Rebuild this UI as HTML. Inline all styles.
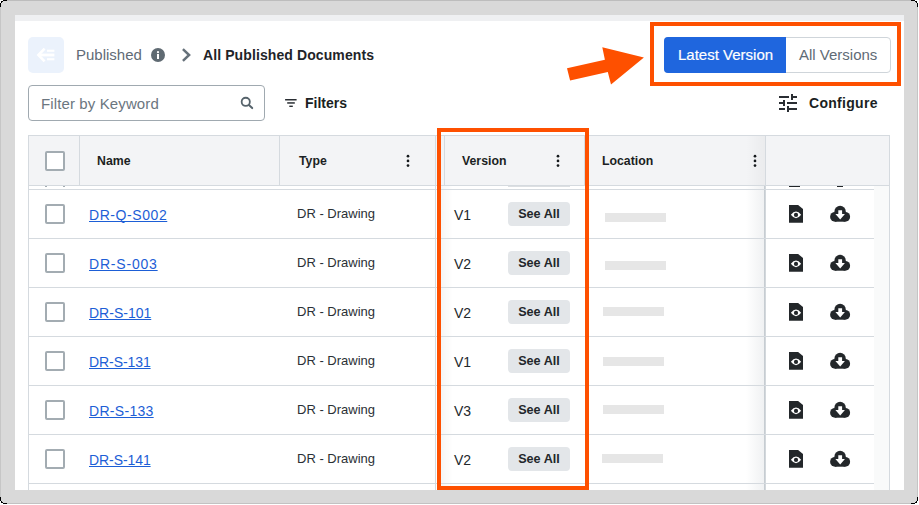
<!DOCTYPE html>
<html><head><meta charset="utf-8">
<style>
*{box-sizing:border-box;margin:0;padding:0}
html,body{width:919px;height:505px;overflow:hidden;background:#d9d9d9;font-family:"Liberation Sans",sans-serif;position:relative}
.a{position:absolute}
#page{position:absolute;left:15px;top:15px;width:889px;height:475px;background:#fff;overflow:hidden}
#band{position:absolute;left:0;top:0;width:889px;height:6px;background:#eff0f2}
.t{position:absolute;white-space:nowrap;line-height:1}
.hdr{position:absolute;left:28px;top:135px;width:862px;height:51px;background:#f3f4f6;border:1px solid #d5dadf}
.vl{position:absolute;width:1px;background:#d5dadf}
.hl{position:absolute;height:1px;background:#d5dadf}
.cb{position:absolute;width:20px;height:20px;border:2px solid #a3acb2;border-radius:2px;background:#fff}
.link{color:#1d5ed6;text-decoration:underline;text-decoration-skip-ink:none;font-size:14px}
.typ{color:#2b3035;font-size:13px}
.ver{color:#23282c;font-size:14px}
.see{position:absolute;width:62px;height:24px;background:#e3e6e9;border-radius:4px;font-size:12.6px;font-weight:bold;color:#22272b;text-align:center;line-height:24px}
.loc{position:absolute;height:9px;background:#e6e6e6}
.kb{position:absolute;width:3px;height:13px}
.kb i{position:absolute;left:0;width:3px;height:3px;border-radius:50%;background:#2a2e33}
</style></head>
<body>
<!-- frame edges -->
<div class="a" style="left:918px;top:0;width:1px;height:505px;background:#fff"></div>
<div class="a" style="left:0;top:504px;width:919px;height:1px;background:#fff"></div>
<div class="a" style="left:0;top:0;width:918px;height:1px;background:#bdbdbd"></div>
<div class="a" style="left:0;top:0;width:1px;height:504px;background:#c6c6c6"></div>
<div class="a" style="left:917px;top:0;width:1px;height:504px;background:#c4c4c4"></div>
<div class="a" style="left:0;top:503px;width:918px;height:1px;background:#c2c2c2"></div>
<svg class="a" style="left:0;top:0;z-index:5" width="919" height="505" shape-rendering="crispEdges"><rect x="0" y="0" width="1" height="1" fill="#fff"/><rect x="917" y="0" width="1" height="1" fill="#fff"/><rect x="0" y="503" width="1" height="1" fill="#fff"/><rect x="917" y="503" width="1" height="1" fill="#fff"/><rect x="1" y="0" width="1" height="1" fill="#fff"/><rect x="916" y="0" width="1" height="1" fill="#fff"/><rect x="1" y="503" width="1" height="1" fill="#fff"/><rect x="916" y="503" width="1" height="1" fill="#fff"/><rect x="2" y="0" width="1" height="1" fill="#fff"/><rect x="915" y="0" width="1" height="1" fill="#fff"/><rect x="2" y="503" width="1" height="1" fill="#fff"/><rect x="915" y="503" width="1" height="1" fill="#fff"/><rect x="0" y="1" width="1" height="1" fill="#fff"/><rect x="917" y="1" width="1" height="1" fill="#fff"/><rect x="0" y="502" width="1" height="1" fill="#fff"/><rect x="917" y="502" width="1" height="1" fill="#fff"/><rect x="0" y="2" width="1" height="1" fill="#fff"/><rect x="917" y="2" width="1" height="1" fill="#fff"/><rect x="0" y="501" width="1" height="1" fill="#fff"/><rect x="917" y="501" width="1" height="1" fill="#fff"/><rect x="3" y="0" width="1" height="1" fill="#000"/><rect x="914" y="0" width="1" height="1" fill="#000"/><rect x="3" y="503" width="1" height="1" fill="#000"/><rect x="914" y="503" width="1" height="1" fill="#000"/><rect x="4" y="0" width="1" height="1" fill="#000"/><rect x="913" y="0" width="1" height="1" fill="#000"/><rect x="4" y="503" width="1" height="1" fill="#000"/><rect x="913" y="503" width="1" height="1" fill="#000"/><rect x="5" y="0" width="1" height="1" fill="#000"/><rect x="912" y="0" width="1" height="1" fill="#000"/><rect x="5" y="503" width="1" height="1" fill="#000"/><rect x="912" y="503" width="1" height="1" fill="#000"/><rect x="6" y="0" width="1" height="1" fill="#000"/><rect x="911" y="0" width="1" height="1" fill="#000"/><rect x="6" y="503" width="1" height="1" fill="#000"/><rect x="911" y="503" width="1" height="1" fill="#000"/><rect x="1" y="1" width="1" height="1" fill="#000"/><rect x="916" y="1" width="1" height="1" fill="#000"/><rect x="1" y="502" width="1" height="1" fill="#000"/><rect x="916" y="502" width="1" height="1" fill="#000"/><rect x="2" y="1" width="1" height="1" fill="#000"/><rect x="915" y="1" width="1" height="1" fill="#000"/><rect x="2" y="502" width="1" height="1" fill="#000"/><rect x="915" y="502" width="1" height="1" fill="#000"/><rect x="1" y="2" width="1" height="1" fill="#000"/><rect x="916" y="2" width="1" height="1" fill="#000"/><rect x="1" y="501" width="1" height="1" fill="#000"/><rect x="916" y="501" width="1" height="1" fill="#000"/><rect x="0" y="3" width="1" height="1" fill="#000"/><rect x="917" y="3" width="1" height="1" fill="#000"/><rect x="0" y="500" width="1" height="1" fill="#000"/><rect x="917" y="500" width="1" height="1" fill="#000"/><rect x="0" y="4" width="1" height="1" fill="#000"/><rect x="917" y="4" width="1" height="1" fill="#000"/><rect x="0" y="499" width="1" height="1" fill="#000"/><rect x="917" y="499" width="1" height="1" fill="#000"/><rect x="0" y="5" width="1" height="1" fill="#000"/><rect x="917" y="5" width="1" height="1" fill="#000"/><rect x="0" y="498" width="1" height="1" fill="#000"/><rect x="917" y="498" width="1" height="1" fill="#000"/><rect x="0" y="6" width="1" height="1" fill="#000"/><rect x="917" y="6" width="1" height="1" fill="#000"/><rect x="0" y="497" width="1" height="1" fill="#000"/><rect x="917" y="497" width="1" height="1" fill="#000"/></svg>
<div id="page">
  <div id="band"></div>
</div>

<!-- back button -->
<div class="a" style="left:28px;top:37px;width:36px;height:36px;background:#ebf2fc;border-radius:5px"></div>
<svg class="a" style="left:28px;top:37px" width="36" height="36" viewBox="0 0 36 36">
  <path d="M16.6 11.6 L10.4 18 L16.6 24.4" fill="none" stroke="#fff" stroke-width="2.6" stroke-linejoin="miter"/>
  <rect x="10" y="16.6" width="16.4" height="2.8" fill="#fff"/>
  <rect x="19" y="12.7" width="7.4" height="2.1" fill="#fff"/>
  <rect x="19" y="21.2" width="7.4" height="2.1" fill="#fff"/>
</svg>

<!-- breadcrumb -->
<div class="t" style="left:76px;top:47px;font-size:15px;color:#5f6b76">Published</div>
<svg class="a" style="left:151px;top:48px" width="14" height="14" viewBox="0 0 14 14">
  <circle cx="7" cy="7" r="7" fill="#5f6a72"/>
  <rect x="6" y="6" width="2" height="5" fill="#fff"/>
  <circle cx="7" cy="4.2" r="1.1" fill="#fff"/>
</svg>
<svg class="a" style="left:180px;top:47px" width="14" height="16" viewBox="0 0 14 16">
  <path d="M2.9 2.2 L9.1 8 L2.9 13.8" fill="none" stroke="#66717a" stroke-width="2.5"/>
</svg>
<div class="t" style="left:203px;top:48px;font-size:14px;font-weight:bold;color:#1f2429;letter-spacing:0.1px">All Published Documents</div>

<!-- toggle -->
<div class="a" style="left:664px;top:37px;width:227px;height:36px;border:1px solid #cfd5da;border-radius:4px;background:#fff"></div>
<div class="a" style="left:664px;top:37px;width:122px;height:36px;background:#1f66de;border-radius:4px 0 0 4px"></div>
<div class="t" style="left:678px;top:47px;font-size:15px;color:#fff;-webkit-text-stroke:0.2px #fff">Latest Version</div>
<div class="t" style="left:799px;top:47px;font-size:15px;color:#5f6b76">All Versions</div>

<!-- orange rect + arrow -->
<div class="a" style="left:650px;top:22px;width:251px;height:64px;border:4px solid #fe5000"></div>
<svg class="a" style="left:0;top:0" width="919" height="505">
  <polygon points="567,68.3 570.1,80.6 607.8,72 611,84.6 643.9,57.4 602.3,47.2 604.9,59.8" fill="#fe5000"/>
</svg>

<!-- search -->
<div class="a" style="left:28px;top:85px;width:237px;height:36px;border:1px solid #a0a9b0;border-radius:4px"></div>
<div class="t" style="left:41px;top:96px;font-size:15px;color:#6b7680;letter-spacing:0.12px">Filter by Keyword</div>
<svg class="a" style="left:236px;top:92px" width="20" height="20" viewBox="0 0 20 20">
  <circle cx="9.75" cy="9.85" r="4.1" fill="none" stroke="#56636b" stroke-width="1.8"/>
  <path d="M13.2 13.3 L16.2 16.1" stroke="#56636b" stroke-width="2" stroke-linecap="round"/>
</svg>
<svg class="a" style="left:280px;top:92px" width="20" height="20" viewBox="0 0 20 20">
  <rect x="5.1" y="7" width="11.5" height="1.5" fill="#2a2e33"/>
  <rect x="7.2" y="10.2" width="7.6" height="1.5" fill="#2a2e33"/>
  <rect x="9.3" y="13.6" width="3.5" height="1.4" fill="#2a2e33"/>
</svg>
<div class="t" style="left:305px;top:96px;font-size:14px;font-weight:bold;color:#1b1f23">Filters</div>

<!-- configure -->
<svg class="a" style="left:776px;top:91px" width="24" height="24" viewBox="0 0 24 24">
  <path fill="#2a2e33" d="M3 17v2h6v-2H3zM3 5v2h10V5H3zm10 16v-2h8v-2h-8v-2h-2v6h2zM7 9v2H3v2h4v2h2V9H7zm14 4v-2H11v2h10zm-6-4h2V7h4V5h-4V3h-2v6z"/>
</svg>
<div class="t" style="left:809px;top:96px;font-size:14px;font-weight:bold;color:#1b1f23;letter-spacing:0.3px">Configure</div>

<!-- table header -->
<div class="hdr"></div>
<div class="vl" style="left:79px;top:136px;height:50px"></div>
<div class="vl" style="left:279px;top:136px;height:50px"></div>
<div class="vl" style="left:435px;top:136px;height:50px"></div>
<div class="vl" style="left:444px;top:136px;height:50px"></div>
<div class="vl" style="left:584px;top:136px;height:50px"></div>
<div class="vl" style="left:765px;top:136px;height:50px"></div>
<div class="cb" style="left:45px;top:151px"></div>
<div class="t" style="left:97px;top:155px;font-size:12.3px;font-weight:bold;color:#1b1f23">Name</div>
<div class="t" style="left:299px;top:155px;font-size:12.3px;font-weight:bold;color:#1b1f23">Type</div>
<div class="t" style="left:462px;top:155px;font-size:12.3px;font-weight:bold;color:#1b1f23">Version</div>
<div class="t" style="left:602px;top:155px;font-size:12.3px;font-weight:bold;color:#1b1f23">Location</div>
<svg class="a" style="left:403px;top:151px" width="10" height="20" viewBox="0 0 10 20"><circle cx="5" cy="5.2" r="1.35" fill="#15191c"/><circle cx="5" cy="9.9" r="1.35" fill="#15191c"/><circle cx="5" cy="14.6" r="1.35" fill="#15191c"/></svg>
<svg class="a" style="left:553px;top:151px" width="10" height="20" viewBox="0 0 10 20"><circle cx="5" cy="5.2" r="1.35" fill="#15191c"/><circle cx="5" cy="9.9" r="1.35" fill="#15191c"/><circle cx="5" cy="14.6" r="1.35" fill="#15191c"/></svg>
<svg class="a" style="left:750px;top:151px" width="10" height="20" viewBox="0 0 10 20"><circle cx="5" cy="5.2" r="1.35" fill="#15191c"/><circle cx="5" cy="9.9" r="1.35" fill="#15191c"/><circle cx="5" cy="14.6" r="1.35" fill="#15191c"/></svg>

<!-- table body -->
<div class="vl" style="left:28px;top:186px;height:304px"></div>
<div class="vl" style="left:889px;top:186px;height:304px"></div>
<div class="vl" style="left:435px;top:186px;height:304px"></div>
<div class="vl" style="left:764px;top:186px;width:2px;height:304px;background:#d3d8dc"></div>

<!-- shadows & remnants -->
<div class="a" style="left:874px;top:186px;width:15px;height:304px;background:#f9fafa"></div>
<div class="a" style="left:746px;top:136px;width:19px;height:49px;background:linear-gradient(to right,rgba(0,0,0,0),rgba(0,0,0,0.035))"></div>
<div class="a" style="left:746px;top:186px;width:19px;height:304px;background:linear-gradient(to right,rgba(40,60,80,0),rgba(40,60,80,0.075))"></div>
<div class="a" style="left:441px;top:186px;width:12px;height:304px;background:linear-gradient(to right,rgba(0,0,0,0.04),rgba(0,0,0,0))"></div>
<div class="a" style="left:45px;top:186px;width:2px;height:1px;background:#a3acb2"></div>
<div class="a" style="left:63px;top:186px;width:2px;height:1px;background:#a3acb2"></div>
<div class="a" style="left:508px;top:186px;width:62px;height:1px;background:#dcdfe2"></div>
<div class="a" style="left:789px;top:186px;width:11px;height:1px;background:#23272a"></div>
<div class="a" style="left:837px;top:186px;width:6px;height:1px;background:#23272a"></div>
<div id="rows">
<div class="hl" style="left:28px;top:189px;width:846px"></div>
<div class="hl" style="left:28px;top:238px;width:846px"></div>
<div class="cb" style="left:45px;top:204px"></div>
<div class="t link" style="left:89px;top:208px;letter-spacing:0.57px">DR-Q-S002</div>
<div class="t typ" style="left:297px;top:207px">DR - Drawing</div>
<div class="t ver" style="left:454px;top:208px">V1</div>
<div class="see" style="left:508px;top:202px">See All</div>
<div class="loc" style="left:605px;top:213px;width:61px"></div>
<svg class="a" style="left:789px;top:205px" width="14" height="18" viewBox="0 0 14 18"><path d="M0 0H9.1L14 3.9V17.7H0Z" fill="#23272a"/><path d="M1.9 9.85Q7 2.95 12.1 9.85Q7 16.75 1.9 9.85Z" fill="#fff"/><circle cx="7" cy="9.95" r="2.1" fill="#23272a"/></svg>
<svg class="a" style="left:826px;top:200px" width="28" height="28" viewBox="0 0 28 28"><g fill="#23272a"><circle cx="14.1" cy="11.5" r="5.7"/><circle cx="9" cy="16.8" r="4.9"/><circle cx="19.2" cy="16.8" r="4.9"/><rect x="9" y="12" width="10.2" height="9.7"/></g><path d="M12.3 10.3H16.1V14.1H18.9L14.2 19.4 9.4 14.1H12.3Z" fill="#fff"/></svg>
<div class="hl" style="left:28px;top:287px;width:846px"></div>
<div class="cb" style="left:45px;top:253px"></div>
<div class="t link" style="left:89px;top:257px;letter-spacing:0.8px">DR-S-003</div>
<div class="t typ" style="left:297px;top:256px">DR - Drawing</div>
<div class="t ver" style="left:454px;top:257px">V2</div>
<div class="see" style="left:508px;top:251px">See All</div>
<div class="loc" style="left:605px;top:261px;width:61px"></div>
<svg class="a" style="left:789px;top:254px" width="14" height="18" viewBox="0 0 14 18"><path d="M0 0H9.1L14 3.9V17.7H0Z" fill="#23272a"/><path d="M1.9 9.85Q7 2.95 12.1 9.85Q7 16.75 1.9 9.85Z" fill="#fff"/><circle cx="7" cy="9.95" r="2.1" fill="#23272a"/></svg>
<svg class="a" style="left:826px;top:249px" width="28" height="28" viewBox="0 0 28 28"><g fill="#23272a"><circle cx="14.1" cy="11.5" r="5.7"/><circle cx="9" cy="16.8" r="4.9"/><circle cx="19.2" cy="16.8" r="4.9"/><rect x="9" y="12" width="10.2" height="9.7"/></g><path d="M12.3 10.3H16.1V14.1H18.9L14.2 19.4 9.4 14.1H12.3Z" fill="#fff"/></svg>
<div class="hl" style="left:28px;top:336px;width:846px"></div>
<div class="cb" style="left:45px;top:302px"></div>
<div class="t link" style="left:89px;top:306px;letter-spacing:0px">DR-S-101</div>
<div class="t typ" style="left:297px;top:305px">DR - Drawing</div>
<div class="t ver" style="left:454px;top:306px">V2</div>
<div class="see" style="left:508px;top:300px">See All</div>
<div class="loc" style="left:603px;top:307px;width:61px"></div>
<svg class="a" style="left:789px;top:303px" width="14" height="18" viewBox="0 0 14 18"><path d="M0 0H9.1L14 3.9V17.7H0Z" fill="#23272a"/><path d="M1.9 9.85Q7 2.95 12.1 9.85Q7 16.75 1.9 9.85Z" fill="#fff"/><circle cx="7" cy="9.95" r="2.1" fill="#23272a"/></svg>
<svg class="a" style="left:826px;top:298px" width="28" height="28" viewBox="0 0 28 28"><g fill="#23272a"><circle cx="14.1" cy="11.5" r="5.7"/><circle cx="9" cy="16.8" r="4.9"/><circle cx="19.2" cy="16.8" r="4.9"/><rect x="9" y="12" width="10.2" height="9.7"/></g><path d="M12.3 10.3H16.1V14.1H18.9L14.2 19.4 9.4 14.1H12.3Z" fill="#fff"/></svg>
<div class="hl" style="left:28px;top:385px;width:846px"></div>
<div class="cb" style="left:45px;top:351px"></div>
<div class="t link" style="left:89px;top:355px;letter-spacing:-0.08px">DR-S-131</div>
<div class="t typ" style="left:297px;top:354px">DR - Drawing</div>
<div class="t ver" style="left:454px;top:355px">V1</div>
<div class="see" style="left:508px;top:349px">See All</div>
<div class="loc" style="left:603px;top:357px;width:61px"></div>
<svg class="a" style="left:789px;top:352px" width="14" height="18" viewBox="0 0 14 18"><path d="M0 0H9.1L14 3.9V17.7H0Z" fill="#23272a"/><path d="M1.9 9.85Q7 2.95 12.1 9.85Q7 16.75 1.9 9.85Z" fill="#fff"/><circle cx="7" cy="9.95" r="2.1" fill="#23272a"/></svg>
<svg class="a" style="left:826px;top:347px" width="28" height="28" viewBox="0 0 28 28"><g fill="#23272a"><circle cx="14.1" cy="11.5" r="5.7"/><circle cx="9" cy="16.8" r="4.9"/><circle cx="19.2" cy="16.8" r="4.9"/><rect x="9" y="12" width="10.2" height="9.7"/></g><path d="M12.3 10.3H16.1V14.1H18.9L14.2 19.4 9.4 14.1H12.3Z" fill="#fff"/></svg>
<div class="hl" style="left:28px;top:434px;width:846px"></div>
<div class="cb" style="left:45px;top:400px"></div>
<div class="t link" style="left:89px;top:404px;letter-spacing:0.3px">DR-S-133</div>
<div class="t typ" style="left:297px;top:403px">DR - Drawing</div>
<div class="t ver" style="left:454px;top:404px">V3</div>
<div class="see" style="left:508px;top:398px">See All</div>
<div class="loc" style="left:603px;top:405px;width:61px"></div>
<svg class="a" style="left:789px;top:401px" width="14" height="18" viewBox="0 0 14 18"><path d="M0 0H9.1L14 3.9V17.7H0Z" fill="#23272a"/><path d="M1.9 9.85Q7 2.95 12.1 9.85Q7 16.75 1.9 9.85Z" fill="#fff"/><circle cx="7" cy="9.95" r="2.1" fill="#23272a"/></svg>
<svg class="a" style="left:826px;top:396px" width="28" height="28" viewBox="0 0 28 28"><g fill="#23272a"><circle cx="14.1" cy="11.5" r="5.7"/><circle cx="9" cy="16.8" r="4.9"/><circle cx="19.2" cy="16.8" r="4.9"/><rect x="9" y="12" width="10.2" height="9.7"/></g><path d="M12.3 10.3H16.1V14.1H18.9L14.2 19.4 9.4 14.1H12.3Z" fill="#fff"/></svg>
<div class="hl" style="left:28px;top:483px;width:846px"></div>
<div class="cb" style="left:45px;top:449px"></div>
<div class="t link" style="left:89px;top:453px;letter-spacing:-0.08px">DR-S-141</div>
<div class="t typ" style="left:297px;top:452px">DR - Drawing</div>
<div class="t ver" style="left:454px;top:453px">V2</div>
<div class="see" style="left:508px;top:447px">See All</div>
<div class="loc" style="left:602px;top:454px;width:61px"></div>
<svg class="a" style="left:789px;top:450px" width="14" height="18" viewBox="0 0 14 18"><path d="M0 0H9.1L14 3.9V17.7H0Z" fill="#23272a"/><path d="M1.9 9.85Q7 2.95 12.1 9.85Q7 16.75 1.9 9.85Z" fill="#fff"/><circle cx="7" cy="9.95" r="2.1" fill="#23272a"/></svg>
<svg class="a" style="left:826px;top:445px" width="28" height="28" viewBox="0 0 28 28"><g fill="#23272a"><circle cx="14.1" cy="11.5" r="5.7"/><circle cx="9" cy="16.8" r="4.9"/><circle cx="19.2" cy="16.8" r="4.9"/><rect x="9" y="12" width="10.2" height="9.7"/></g><path d="M12.3 10.3H16.1V14.1H18.9L14.2 19.4 9.4 14.1H12.3Z" fill="#fff"/></svg>
</div><!--/rows-->
<div class="a" style="left:437px;top:128px;width:152px;height:362px;border:4px solid #fe5000"></div>
</body></html>
